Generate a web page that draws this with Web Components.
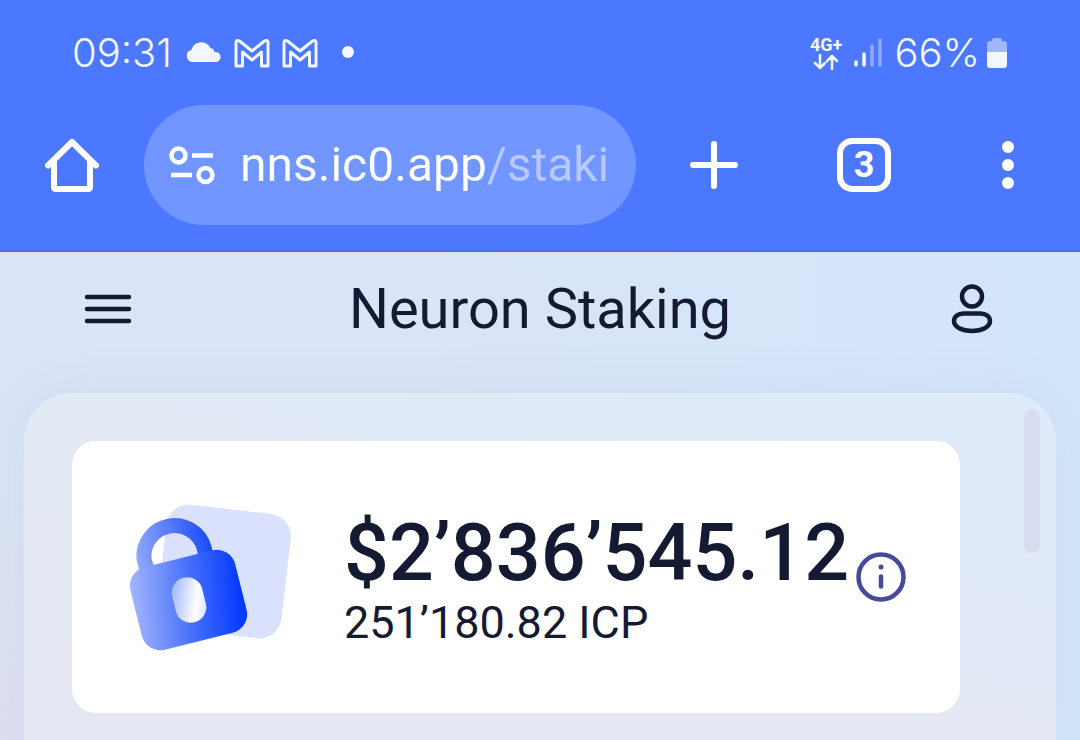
<!DOCTYPE html>
<html lang="en">
<head>
<meta charset="utf-8">
<meta name="viewport" content="width=device-width, initial-scale=1">
<title>Neuron Staking</title>
<style>
body {
  margin: 0;
  font-family: Roboto, "Liberation Sans", sans-serif;
}
</style>
</head>
<body>
<phone-screen>
  <status-bar slot="chrome" time="09:31" battery="66%"></status-bar>
  <browser-toolbar slot="chrome" url="nns.ic0.app/staking" tabs="3"></browser-toolbar>
  <app-header>Neuron Staking</app-header>
  <scroll-panel>
    <stake-card>
      <span slot="amount">$2’836’545.12</span>
      <span slot="tokens">251’180.82 ICP</span>
    </stake-card>
  </scroll-panel>
</phone-screen>

<script>
// shared helper: build a template from a string and attach it
function attach(el, html) {
  const template = document.createElement("template");
  template.innerHTML = html;
  el.attachShadow({ mode: "open" });
  el.shadowRoot.appendChild(template.content.cloneNode(true));
}

class PhoneScreen extends HTMLElement {
  constructor() {
    super();
    attach(this, `
<style>
:host {
  display: flex;
  flex-direction: column;
  min-height: 100vh;
  color: #141a31;
}
.chrome {
  background: #4c78ff;
  border-bottom: 2px solid #4a70dc;
}
main {
  flex: 1;
  display: flex;
  flex-direction: column;
  background:
    linear-gradient(to left, #d3e5fa 0, rgba(211, 229, 250, 0) 60%),
    linear-gradient(to bottom, #d9e5f6 0, #d9e4f5 40%, #dddeef 100%);
}
</style>
<div class="chrome"><slot name="chrome"></slot></div>
<main><slot></slot></main>
`);
  }
}

class StatusBar extends HTMLElement {
  constructor() {
    super();
    attach(this, `
<style>
:host {
  display: flex;
  justify-content: space-between;
  align-items: center;
  height: 105px;
  padding: 0 72px;
  box-sizing: border-box;
  color: #f1f6ff;
  font: 300 40px/48px Inter, Roboto, sans-serif;
}
.side {
  display: flex;
  align-items: center;
}
.left { gap: 12px; }
.right { gap: 12px; }
.net {
  display: grid;
  justify-items: center;
  font: 700 18px/18px Roboto, sans-serif;
}
.power {
  display: flex;
  align-items: center;
  gap: 6px;
}
svg { display: block; }
</style>
<div class="side left">
  <span id="time"></span>
  <svg width="38" height="28" viewBox="0 0 38 28" fill="currentColor"><path d="M8.500 23a6.200 6.200 0 0 1-1-12.200 10 10 0 0 1 8-7.300 10 10 0 0 1 11 5.500 5 5 0 0 1 4 4 5 5 0 0 1 2 10z"/></svg>
  <svg width="36" height="30" viewBox="0 0 36 30" fill="none" stroke="currentColor" stroke-width="3" stroke-linejoin="round"><path d="M2 28V4Q2.500 1.500 5.500 3L18 13 30.500 3Q33.500 1.500 34 4V28H27.500V14L18 22 8.500 14V28Z"/></svg>
  <svg width="36" height="30" viewBox="0 0 36 30" fill="none" stroke="currentColor" stroke-width="3" stroke-linejoin="round"><path d="M2 28V4Q2.500 1.500 5.500 3L18 13 30.500 3Q33.500 1.500 34 4V28H27.500V14L18 22 8.500 14V28Z"/></svg>
  <svg width="36" height="28" viewBox="0 0 36 28" fill="currentColor"><circle cx="18" cy="13" r="6"/></svg>
</div>
<div class="side right">
  <span class="net">4G+
    <svg width="26" height="16" viewBox="0 0 26 16" fill="none" stroke="currentColor" stroke-width="2.500" stroke-linecap="round" stroke-linejoin="round"><path d="M7 1V14M2 9l5 5 5-5M19 15V2M14 7l5-5 5 5"/></svg>
  </span>
  <svg width="28" height="30" viewBox="0 0 28 30" stroke="currentColor" stroke-width="3.500" stroke-linecap="round"><path d="M2 24V27M10 16V27"/><path opacity=".4" d="M18 8V27M26 2V27"/></svg>
  <span class="power">
    <span id="battery"></span>
    <svg width="22" height="32" viewBox="0 0 22 32" fill="currentColor"><path opacity=".5" d="M1 15V7a3 3 0 0 1 3-3h2V3a2 2 0 0 1 2-2h6a2 2 0 0 1 2 2v1h2a3 3 0 0 1 3 3v8z"/><path d="M1 15H21V28a3 3 0 0 1-3 3H4a3 3 0 0 1-3-3z"/></svg>
  </span>
</div>
`);
  }

  connectedCallback() {
    this.shadowRoot.querySelector("#time").textContent = this.getAttribute("time");
    this.shadowRoot.querySelector("#battery").textContent = this.getAttribute("battery");
  }
}

class BrowserToolbar extends HTMLElement {
  constructor() {
    super();
    attach(this, `
<style>
:host {
  display: grid;
  grid-template-columns: 144px minmax(0, 1fr) 156px 144px 144px;
  align-items: center;
  padding-bottom: 25px;
  color: #fff;
}
button {
  display: grid;
  place-items: center;
  height: 96px;
  padding: 0;
  border: 0;
  background: none;
  color: inherit;
}
.url {
  display: flex;
  align-items: center;
  gap: 24px;
  height: 120px;
  padding: 0 24px;
  box-sizing: border-box;
  border-radius: 60px;
  background: #7296ff;
}
input {
  flex: 1;
  min-width: 0;
  height: 72px;
  padding: 0;
  border: 0;
  outline: 0;
  font: 400 48px/72px Roboto, sans-serif;
  /* host in white, path dimmed */
  color: transparent;
  background: linear-gradient(to right, #fff 246px, #b7c9ff 246px);
  -webkit-background-clip: text;
  background-clip: text;
}
svg { display: block; }
#tabs {
  display: grid;
  place-items: center;
  width: 54px;
  height: 54px;
  box-sizing: border-box;
  border: 6px solid #fff;
  border-radius: 15px;
  font: 700 36px/40px Roboto, sans-serif;
}
</style>
<button type="button" aria-label="Home">
  <svg width="56" height="56" viewBox="0 0 56 56" fill="none" stroke="currentColor" stroke-width="6" stroke-linecap="round" stroke-linejoin="round"><path d="M4 28.500 28 5 52 28.500"/><path d="M10 24V50Q10 52 12 52H44Q46 52 46 50V24"/></svg>
</button>
<div class="url">
  <svg width="48" height="40" viewBox="0 0 48 40" fill="none" stroke="currentColor" stroke-width="4.500"><circle cx="10.500" cy="10.500" r="7"/><path d="M24 10.500H45M3 30H24"/><circle cx="37.500" cy="30" r="7"/></svg>
  <input type="text" aria-label="Address">
</div>
<button type="button" aria-label="New tab">
  <svg width="48" height="48" viewBox="0 0 48 48" stroke="currentColor" stroke-width="6" stroke-linecap="round"><path d="M24 3V45M3 24H45"/></svg>
</button>
<button type="button" aria-label="Open tabs"><span id="tabs"></span></button>
<button type="button" aria-label="More options">
  <svg width="12" height="48" viewBox="0 0 12 48" fill="currentColor"><circle cx="6" cy="6" r="6"/><circle cx="6" cy="24" r="6"/><circle cx="6" cy="42" r="6"/></svg>
</button>
`);
  }

  connectedCallback() {
    this.shadowRoot.querySelector("input").value = this.getAttribute("url");
    this.shadowRoot.querySelector("#tabs").textContent = this.getAttribute("tabs");
  }
}

class AppHeader extends HTMLElement {
  constructor() {
    super();
    attach(this, `
<style>
:host {
  display: grid;
  grid-template-columns: 96px 1fr 96px;
  align-items: center;
  height: 114px;
  margin-bottom: 27px;
  padding: 0 60px;
}
h1 {
  margin: 0;
  text-align: center;
  font: 400 56px/72px Roboto, sans-serif;
}
button {
  display: grid;
  place-items: center;
  height: 72px;
  padding: 0;
  border: 0;
  background: none;
  color: inherit;
}
</style>
<button type="button" aria-label="Menu">
  <svg width="48" height="32" viewBox="0 0 48 32" stroke="currentColor" stroke-width="4.500" stroke-linecap="round"><path d="M3 4H45M3 16H45M3 28H45"/></svg>
</button>
<h1><slot></slot></h1>
<button type="button" aria-label="Account">
  <svg width="42" height="50" viewBox="0 0 42 50" fill="none" stroke="currentColor" stroke-width="4.500"><circle cx="21" cy="12.500" r="10"/><path d="M12.500 29.500H29.500C35.500 29.500 39 33 39 37 39 43 31 47 21 47S3 43 3 37C3 33 6.500 29.500 12.500 29.500Z"/></svg>
</button>
`);
  }
}

class ScrollPanel extends HTMLElement {
  constructor() {
    super();
    attach(this, `
<style>
:host {
  flex: 1;
  display: block;
  position: relative;
  margin: 0 24px;
  padding: 48px 96px 27px 48px;
  border-radius: 48px 48px 0 0;
  background:
    linear-gradient(to bottom left, #deebfa 0, rgba(222, 235, 250, 0) 60%),
    linear-gradient(to bottom, #e3eaf5, #e5e7f3);
  box-shadow: 0 0 40px rgba(190, 200, 230, .3);
}
.thumb {
  position: absolute;
  top: 16px;
  right: 16px;
  width: 16px;
  height: 144px;
  border-radius: 8px;
  background: #d8dcf0;
}
</style>
<slot></slot>
<div class="thumb"></div>
`);
  }
}

class StakeCard extends HTMLElement {
  constructor() {
    super();
    attach(this, `
<style>
:host {
  display: flex;
  align-items: center;
  min-height: 272px;
  padding: 0 48px 0 56px;
  box-sizing: border-box;
  border-radius: 24px;
  background: #fff;
}
svg {
  display: block;
  flex: none;
}
.text {
  margin-left: 48px;
  padding-top: 8px;
  white-space: nowrap;
}
.amount { font: 500 79px/84px Roboto, sans-serif; }
.tokens { font: 400 45px/56px Roboto, sans-serif; }
button {
  margin-left: 6px;
  padding: 0;
  border: 0;
  background: none;
  color: #454b98;
}
</style>
<svg width="168" height="160" viewBox="18 7 168 160">
  <defs>
    <linearGradient id="body" gradientUnits="userSpaceOnUse" x1="22" y1="95" x2="132" y2="115"><stop offset="0" stop-color="#a3b7fb"/><stop offset=".5" stop-color="#4d74fb"/><stop offset="1" stop-color="#0339ff"/></linearGradient>
    <linearGradient id="shackle" gradientUnits="userSpaceOnUse" x1="26" y1="65" x2="103" y2="55"><stop offset="0" stop-color="#8fa8fa"/><stop offset="1" stop-color="#1548fa"/></linearGradient>
    <linearGradient id="hole" gradientUnits="userSpaceOnUse" x1="62" y1="103" x2="97" y2="117"><stop offset="0" stop-color="#a0b8fd"/><stop offset=".7" stop-color="#fff"/><stop offset="1" stop-color="#d5e1ff"/></linearGradient>
  </defs>
  <rect x="51.500" y="19" width="125" height="125" rx="22" transform="rotate(6.600 114 81.500)" fill="#d9e1fc"/>
  <path d="M37.500 82 34 69A30.700 30.700 0 0 1 94 57.500L97 70" fill="none" stroke="url(#shackle)" stroke-width="15"/>
  <rect x="24.500" y="67.500" width="108" height="85" rx="19" transform="rotate(-14 78.500 110)" fill="url(#body)"/>
  <rect x="63.500" y="87" width="31" height="46" rx="15.500" transform="rotate(-14 79 110)" fill="url(#hole)"/>
</svg>
<div class="text">
  <div class="amount"><slot name="amount"></slot></div>
  <div class="tokens"><slot name="tokens"></slot></div>
</div>
<button type="button" aria-label="Info">
  <svg width="52" height="52" viewBox="0 0 52 52" fill="none" stroke="currentColor" stroke-width="4.500" stroke-linecap="round"><circle cx="26" cy="26" r="22.500"/><path d="M26 25.500V35.500"/><circle cx="26" cy="16" r="2.500" fill="currentColor" stroke="none"/></svg>
</button>
`);
  }
}

customElements.define("phone-screen", PhoneScreen);
customElements.define("status-bar", StatusBar);
customElements.define("browser-toolbar", BrowserToolbar);
customElements.define("app-header", AppHeader);
customElements.define("scroll-panel", ScrollPanel);
customElements.define("stake-card", StakeCard);
</script>
</body>
</html>
